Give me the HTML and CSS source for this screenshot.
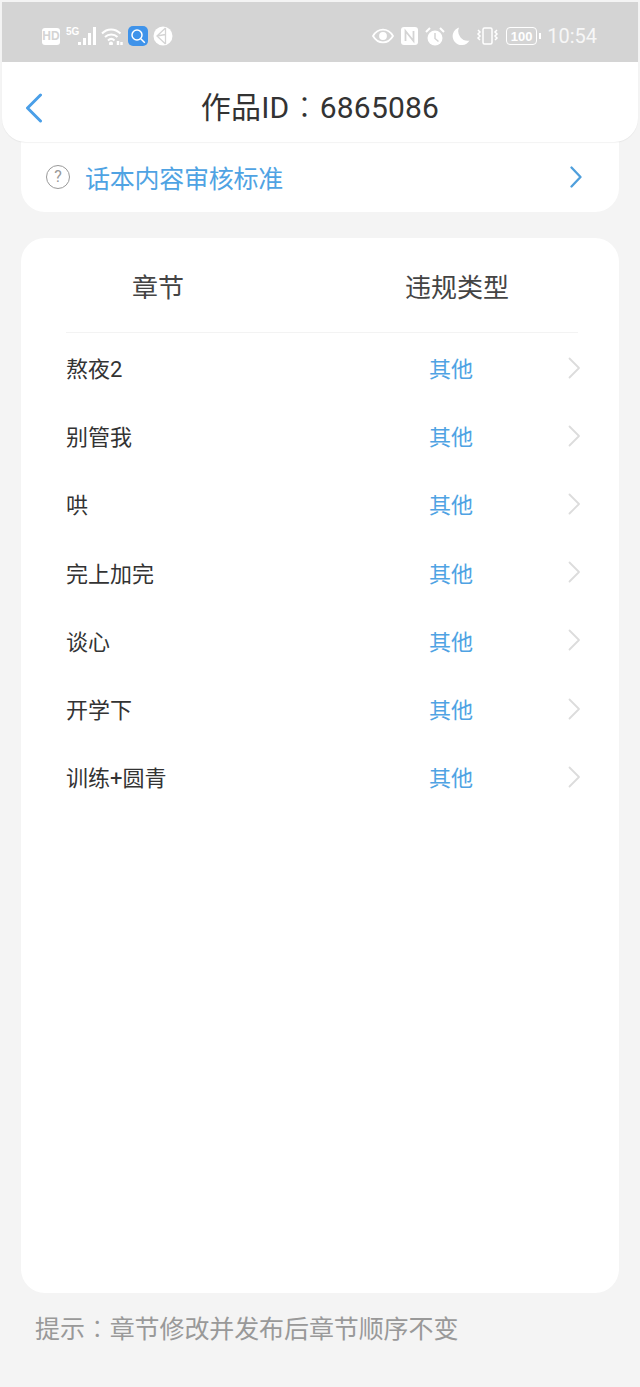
FILE: index.html
```html
<!DOCTYPE html>
<html lang="zh-CN">
<head>
    <meta charset="UTF-8">
    <meta name="viewport" content="width=device-width, initial-scale=1.0"/>
    <title>作品ID：6865086</title>
    <link rel="stylesheet" href="styles.css">
</head>
<body>
    <header class="top">
        <div class="status">
            <div class="status-group">
                <span class="hd">HD</span>
                <span class="net">5G</span>
                <svg class="signal" width="20" height="18" viewBox="0 0 20 18"><path d="M1 15h3v3H1zM6 11h3v7H6zM11 6h3v12h-3zM16 0h3v18h-3z" fill="#fff"/></svg>
                <svg class="wifi" width="22" height="18" viewBox="0 0 22 18" fill="none" stroke="#fff" stroke-width="2"><path d="M1 6.500C6 1 14 1 19.500 6.500"/><path d="M4 10c3.500-3.500 9-3.500 12.500 0"/><path d="M7 13.500c2-2 4.500-2 6.500 0"/><circle cx="10" cy="16.500" r="1" fill="#fff"/><path d="M17 14v4M20.500 15v3" stroke-width="2.500"/></svg>
                <span class="app-search">
                    <svg width="16" height="16" viewBox="0 0 16 16" fill="none" stroke="#fff" stroke-width="1.500"><circle cx="7" cy="7" r="5"/><path d="M10.800 10.800l4 4"/></svg>
                </span>
                <svg class="app-round" width="20" height="20" viewBox="0 0 20 20"><circle cx="10" cy="10" r="9.500" fill="#fff"/><path d="M12.500 2L4 10l8.500 8M12.500 2v16M4 10l8.500-1.500" fill="none" stroke="#d4d4d4" stroke-width="1.300"/></svg>
            </div>
            <div class="status-group">
                <svg width="22" height="16" viewBox="0 0 22 16" fill="none" stroke="#fff" stroke-width="1.800"><path d="M1 8c5-8.500 15-8.500 20 0-5 8.500-15 8.500-20 0z"/><circle cx="11" cy="8" r="3" fill="#fff"/></svg>
                <svg class="gap-n" width="17" height="18" viewBox="0 0 17 18"><rect width="17" height="18" rx="3" fill="#fff"/><path d="M4.500 14V4l8 10V4" fill="none" stroke="#d4d4d4" stroke-width="1.800"/></svg>
                <svg class="gap-n" width="20" height="19" viewBox="0 0 20 19"><circle cx="10" cy="11" r="7.500" fill="#fff"/><path d="M10 6v5.500l3.500 3" fill="none" stroke="#d4d4d4" stroke-width="1.500"/><path d="M1 5l4-4M19 5l-4-4" stroke="#fff" stroke-width="2"/></svg>
                <svg class="gap-s" width="19" height="19" viewBox="0 0 19 19"><path d="M8 0.500a9 9 0 1 0 10.500 13A9.500 9.500 0 0 1 8 0.500z" fill="#fff"/></svg>
                <svg class="gap-s" width="23" height="18" viewBox="0 0 23 18" fill="none" stroke="#fff" stroke-width="1.500"><rect x="7" y="1" width="9" height="16" rx="1.500"/><path d="M2 3l2 2-2 2 2 2-2 2 2 2M21 3l-2 2 2 2-2 2 2 2-2 2"/></svg>
                <span class="battery"><span class="battery-level">100</span></span>
                <span class="time">10:54</span>
            </div>
        </div>
        <div class="titlebar">
            <svg class="back" width="18" height="30" viewBox="0 0 18 30" fill="none" stroke="#4a9fe8" stroke-width="3" stroke-linecap="round" stroke-linejoin="round"><path d="M15.500 2L2.500 15l13 13"/></svg>
            <h1>作品ID<span class="colon" lang="zh-TW">：</span>6865086</h1>
        </div>
    </header>

    <div class="card notice">
        <span class="help">?</span>
        <span class="notice-text">话本内容审核标准</span>
        <svg width="12" height="22" viewBox="0 0 12 22" fill="none" stroke="#4f9fdc" stroke-width="2.300" stroke-linecap="round" stroke-linejoin="round"><path d="M1.500 1.500L10.500 11l-9 9.500"/></svg>
    </div>

    <div class="card list">
        <div class="list-head">
            <span>章节</span>
            <span>违规类型</span>
        </div>
        <div class="row"><span class="row-name">熬夜2</span><span class="row-type">其他</span><svg class="row-arrow" width="13" height="22" viewBox="0 0 13 22" fill="none" stroke="#dcdcdc" stroke-width="1.800" stroke-linecap="round" stroke-linejoin="round"><path d="M1.500 1.500L11 11l-9.500 9.500"/></svg></div>
        <div class="row"><span class="row-name">别管我</span><span class="row-type">其他</span><svg class="row-arrow" width="13" height="22" viewBox="0 0 13 22" fill="none" stroke="#dcdcdc" stroke-width="1.800" stroke-linecap="round" stroke-linejoin="round"><path d="M1.500 1.500L11 11l-9.500 9.500"/></svg></div>
        <div class="row"><span class="row-name">哄</span><span class="row-type">其他</span><svg class="row-arrow" width="13" height="22" viewBox="0 0 13 22" fill="none" stroke="#dcdcdc" stroke-width="1.800" stroke-linecap="round" stroke-linejoin="round"><path d="M1.500 1.500L11 11l-9.500 9.500"/></svg></div>
        <div class="row"><span class="row-name">完上加完</span><span class="row-type">其他</span><svg class="row-arrow" width="13" height="22" viewBox="0 0 13 22" fill="none" stroke="#dcdcdc" stroke-width="1.800" stroke-linecap="round" stroke-linejoin="round"><path d="M1.500 1.500L11 11l-9.500 9.500"/></svg></div>
        <div class="row"><span class="row-name">谈心</span><span class="row-type">其他</span><svg class="row-arrow" width="13" height="22" viewBox="0 0 13 22" fill="none" stroke="#dcdcdc" stroke-width="1.800" stroke-linecap="round" stroke-linejoin="round"><path d="M1.500 1.500L11 11l-9.500 9.500"/></svg></div>
        <div class="row"><span class="row-name">开学下</span><span class="row-type">其他</span><svg class="row-arrow" width="13" height="22" viewBox="0 0 13 22" fill="none" stroke="#dcdcdc" stroke-width="1.800" stroke-linecap="round" stroke-linejoin="round"><path d="M1.500 1.500L11 11l-9.500 9.500"/></svg></div>
        <div class="row"><span class="row-name">训练+圆青</span><span class="row-type">其他</span><svg class="row-arrow" width="13" height="22" viewBox="0 0 13 22" fill="none" stroke="#dcdcdc" stroke-width="1.800" stroke-linecap="round" stroke-linejoin="round"><path d="M1.500 1.500L11 11l-9.500 9.500"/></svg></div>
    </div>

    <p class="hint">提示<span class="colon" lang="zh-TW">：</span>章节修改并发布后章节顺序不变</p>
</body>
</html>
```

FILE: styles.css
```css
html, body { margin: 0; padding: 0; }
body { width: 640px; height: 1387px; overflow: hidden; padding-top: 2px; box-sizing: border-box; background: #f4f4f4; font-family: 'Roboto', 'Noto Sans CJK SC', sans-serif; color: #333; }

.colon { font-family: 'Noto Sans CJK TC', sans-serif; font-weight: 300; }

.top { margin: 0 2px; height: 140px; background: #fff; border-radius: 0 0 24px 24px; box-shadow: 0 1px 1px rgba(0,0,0,0.05); overflow: hidden; position: relative; z-index: 1; }
.status { height: 60px; padding: 8px 41px 0 40px; background: #d4d4d4; display: flex; justify-content: space-between; align-items: center; box-sizing: border-box; }
.status-group { display: flex; align-items: center; }
.hd { width: 18px; height: 17px; border-radius: 3px; background: #fff; color: #d4d4d4; font: bold 12px/17px 'Liberation Sans', sans-serif; text-align: center; }
.net { width: 11px; margin-left: 6px; margin-bottom: 8px; color: #fff; font: bold 10px/10px 'Liberation Sans', sans-serif; }
.wifi { margin-left: 4px; }
.app-search { width: 20px; height: 20px; margin-left: 5px; border-radius: 5px; background: #3f93ea; display: flex; align-items: center; justify-content: center; }
.app-round { margin-left: 5px; }
.gap-n { margin-left: 7px; }
.gap-s { margin-left: 6px; }
.battery { width: 31px; height: 18px; margin-left: 7px; border: 1.5px solid #fff; border-radius: 4px; box-sizing: border-box; display: flex; align-items: center; justify-content: center; position: relative; }
.battery::after { content: ''; position: absolute; right: -5px; top: 4.500px; width: 2px; height: 6px; background: #fff; }
.battery-level { color: #fff; font: bold 13px/13px 'Liberation Sans', sans-serif; }
.time { margin-left: 10px; color: #f7f7f7; font: 400 20px/24px 'Roboto', sans-serif; }

.titlebar { height: 80px; padding-top: 8px; display: flex; align-items: center; justify-content: center; position: relative; box-sizing: border-box; }
.titlebar h1 { margin: 0; font-size: 30px; font-weight: 400; line-height: 40px; letter-spacing: 0.2px; }
.back { position: absolute; left: 23px; top: 31px; }

.card { margin: 0 21px; background: #fff; }
.notice { height: 70px; padding: 0 37px 0 25px; border-radius: 0 0 24px 24px; display: flex; align-items: center; box-sizing: border-box; }
.help { width: 24px; height: 24px; border: 1px solid #999; border-radius: 50%; box-sizing: border-box; color: #999; font-size: 16px; line-height: 22px; text-align: center; }
.notice-text { flex: 1; margin-left: 15px; color: #4fa3e3; font-family: 'Noto Sans CJK SC', sans-serif; font-size: 25px; line-height: 34px; letter-spacing: -0.25px; }

.list { height: 1055px; margin-top: 26px; padding: 0 38px 0 45px; border-radius: 24px; box-sizing: border-box; }
.list-head { height: 95px; margin-right: 3px; padding-left: 66px; display: flex; align-items: center; gap: 221px; box-sizing: border-box; border-bottom: 1px solid #f3f3f3; font-size: 26px; color: #444; }
.row { height: 68.2px; display: flex; align-items: center; }
.row-name { flex: 1; font-size: 22px; color: #333; }
.row-type { margin-right: 95px; color: #4fa3e3; font-size: 22px; }
.row-arrow { margin-top: 1px; }

.hint { margin: 17px 0 0 35px; color: #999; font-size: 25px; line-height: 34px; letter-spacing: -0.1px; }
```
